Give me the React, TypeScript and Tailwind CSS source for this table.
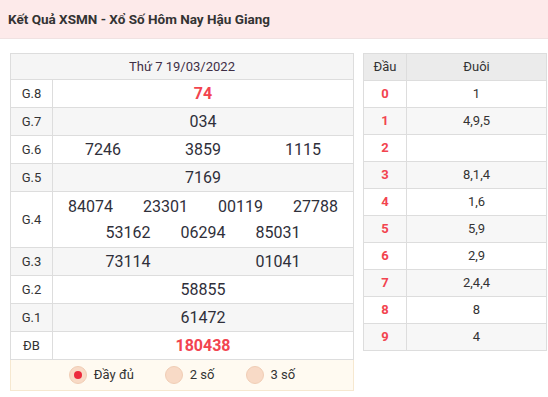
const prizes: { label: string; cols: number; nums: string[]; red?: boolean }[] = [
  { label: "G.8", cols: 1, nums: ["74"], red: true },
  { label: "G.7", cols: 1, nums: ["034"] },
  { label: "G.6", cols: 3, nums: ["7246", "3859", "1115"] },
  { label: "G.5", cols: 1, nums: ["7169"] },
  { label: "G.4", cols: 4, nums: ["84074", "23301", "00119", "27788", "53162", "06294", "85031"] },
  { label: "G.3", cols: 2, nums: ["73114", "01041"] },
  { label: "G.2", cols: 1, nums: ["58855"] },
  { label: "G.1", cols: 1, nums: ["61472"] },
  { label: "ĐB", cols: 1, nums: ["180438"], red: true },
];

const loto = ["1", "4,9,5", "", "8,1,4", "1,6", "5,9", "2,9", "2,4,4", "8", "4"];

function Numbers({ cols, nums, red }: { cols: number; nums: string[]; red?: boolean }) {
  const cls = red ? "font-bold text-[#f2444f]" : "text-[#2f2f3a]";
  if (cols === 4) {
    return (
      <div className="flex flex-col justify-center py-[2px] leading-[26px]">
        <div className="flex justify-center">
          {nums.slice(0, 4).map((n) => (
            <span key={n} className={`w-[75px] text-center ${cls}`}>{n}</span>
          ))}
        </div>
        <div className="flex justify-center">
          {nums.slice(4).map((n) => (
            <span key={n} className={`w-[75px] text-center ${cls}`}>{n}</span>
          ))}
        </div>
      </div>
    );
  }
  const grid = cols === 3 ? "grid-cols-3" : cols === 2 ? "grid-cols-2" : "grid-cols-1";
  return (
    <div className={`grid h-full items-center ${grid}`}>
      {nums.map((n) => (
        <span key={n} className={`text-center ${cls}`}>{n}</span>
      ))}
    </div>
  );
}

function Radio({ label, checked }: { label: string; checked?: boolean }) {
  return (
    <label className="flex items-center gap-[7px]">
      <span className="flex h-[18px] w-[18px] items-center justify-center rounded-full border border-[#f0cdb5] bg-[#f8dac6]">
        {checked && <span className="h-[8px] w-[8px] rounded-full bg-[#ec2a3c]" />}
      </span>
      <span className="text-[13px] text-[#333]">{label}</span>
    </label>
  );
}

export default function App() {
  return (
    <div className="h-[397px] w-[548px] bg-white font-['Roboto',sans-serif]">
      <div className="flex h-[39px] items-center border-b border-[#f0e2e2] bg-[#fdeaea] px-[8px]">
        <h1 className="text-[13.5px] font-bold text-[#333]">Kết Quả XSMN - Xổ Số Hôm Nay Hậu Giang</h1>
      </div>

      <div className="flex items-start gap-[9px] pl-[10px] pt-[14px]">
        <div className="w-[344px]">
          <div className="border border-b-0 border-[#dddddd]">
            <div className="flex h-[26px] items-center justify-center border-b border-[#dddddd] bg-[#f5f5f5] text-[13px] text-[#3f2f46]">
              Thứ 7 19/03/2022
            </div>
            {prizes.map((p, i) => (
              <div
                key={p.label}
                className={`flex border-b border-[#dddddd] ${p.cols === 4 ? "h-[56px]" : "h-[28px]"} ${i % 2 === 1 ? "bg-[#f6f6f6]" : "bg-white"}`}
              >
                <div className="flex w-[42px] shrink-0 items-center justify-center border-r border-[#dddddd] text-[13px] text-[#333]">
                  {p.label}
                </div>
                <div className="flex-1 text-[16px]">
                  <Numbers cols={p.cols} nums={p.nums} red={p.red} />
                </div>
              </div>
            ))}
          </div>
          <div className="flex h-[31px] items-center justify-center gap-[31px] border border-t-0 border-[#f6e8d0] bg-[#fffaf1]">
            <Radio label="Đầy đủ" checked />
            <Radio label="2 số" />
            <Radio label="3 số" />
          </div>
        </div>

        <div className="w-[184px] border border-b-0 border-[#dddddd] text-[13px]">
          <div className="flex h-[27px] border-b border-[#dddddd] bg-[#ebebeb] text-[#333]">
            <div className="flex w-[43px] items-center justify-center border-r border-[#dddddd]">Đầu</div>
            <div className="flex flex-1 items-center justify-center">Đuôi</div>
          </div>
          {loto.map((t, i) => (
            <div
              key={i}
              className={`flex h-[27px] border-b border-[#dddddd] ${i % 2 === 1 ? "bg-[#f7f7f7]" : "bg-white"}`}
            >
              <div className="flex w-[43px] items-center justify-center border-r border-[#dddddd] font-bold text-[#f2444f]">{i}</div>
              <div className="flex flex-1 items-center justify-center text-[#333]">{t}</div>
            </div>
          ))}
        </div>
      </div>
    </div>
  );
}
